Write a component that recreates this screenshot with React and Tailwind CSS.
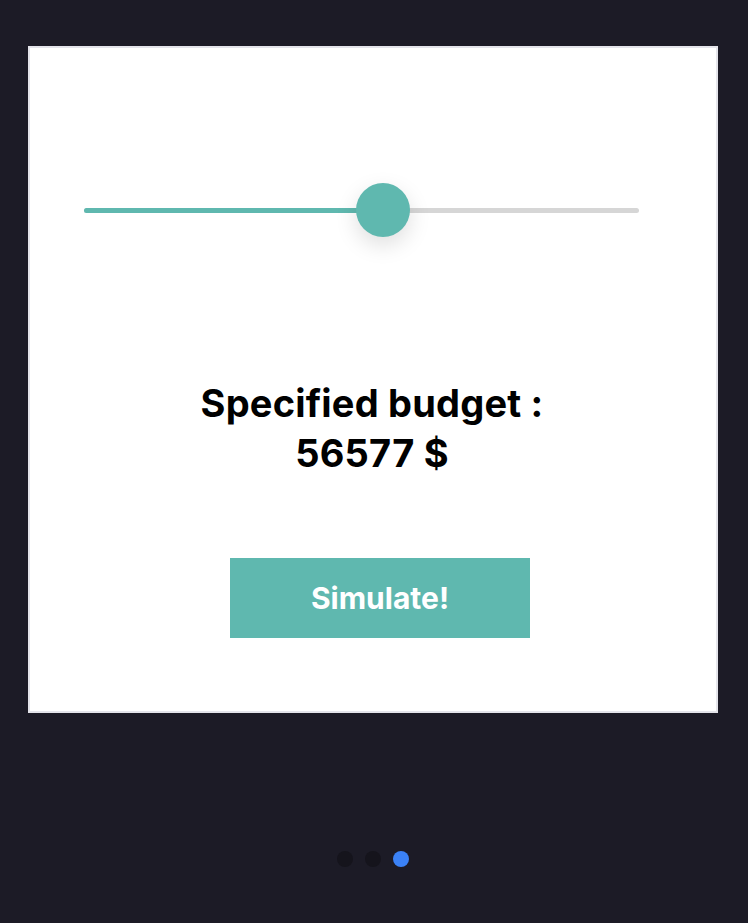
export default function App() {
  return (
    <div className="min-h-[923px] w-[748px] bg-[#1c1b26] pt-[46px] flex flex-col" style={{ fontFamily: "Inter, 'Noto Sans', sans-serif" }}>
      <div className="ml-[28px] w-[690px] h-[667px] border-2 border-[#e4e4ea] bg-white flex flex-col">
        <div className="mt-[135px] ml-[54px] w-[555px] h-[54px] relative flex items-center">
          <div className="w-full h-[5px] rounded-full bg-[#d6d6d6] relative">
            <div className="absolute left-0 top-0 h-full w-[299px] rounded-full bg-[#5fb8af]"></div>
          </div>
          <div className="absolute left-[272px] top-0 w-[54px] h-[54px] rounded-full bg-[#5fb8af] shadow-[0_8px_22px_rgba(0,0,0,0.13)]"></div>
        </div>
        <div className="mt-[141px] text-center text-black font-bold text-[38px] leading-[50px] tracking-[0.2px] ml-[-2px]">
          <div>Specified budget :</div>
          <div>56577 $</div>
        </div>
        <div className="mt-[80px] ml-[200px] w-[300px] h-[80px] bg-[#5fb8af] flex items-center justify-center text-white font-bold text-[30px]">
          Simulate!
        </div>
      </div>
      <div className="mt-[138px] flex justify-center gap-[12px] ml-[-2px]">
        <div className="w-[16px] h-[16px] rounded-full bg-[#15141c]"></div>
        <div className="w-[16px] h-[16px] rounded-full bg-[#15141c]"></div>
        <div className="w-[16px] h-[16px] rounded-full bg-[#3b82f6]"></div>
      </div>
    </div>
  );
}
